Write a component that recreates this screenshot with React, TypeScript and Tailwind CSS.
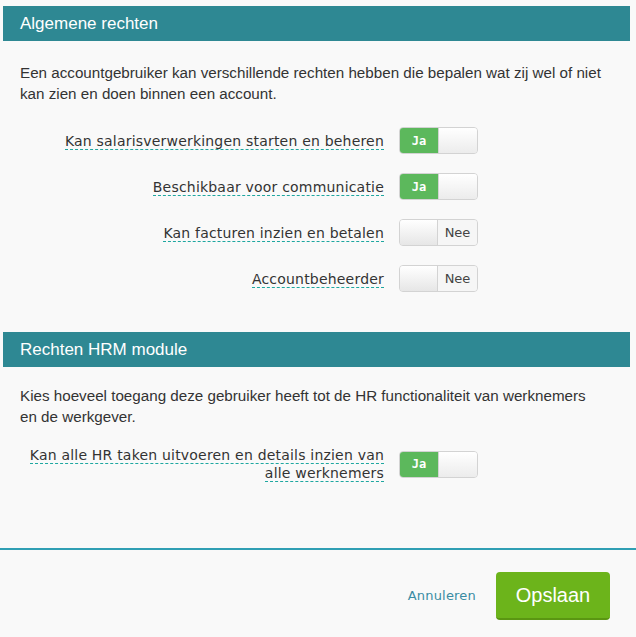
import { ReactNode } from "react";

function Toggle({ on }: { on: boolean }) {
  return (
    <div className="flex h-[27px] w-[79px] shrink-0 overflow-hidden rounded-[4px] border border-[#d3d3d3] bg-[#f4f4f4]">
      {on ? (
        <>
          <div className="flex w-[38px] items-center justify-center bg-[#5cb85c] font-['DejaVu_Sans_Mono',monospace] text-[12px] font-bold text-white">
            Ja
          </div>
          <div className="flex-1 border-l border-[#d3d3d3] bg-gradient-to-b from-white to-[#ececec]" />
        </>
      ) : (
        <>
          <div className="w-[38px] border-r border-[#d3d3d3] bg-gradient-to-b from-white to-[#e6e6e6]" />
          <div className="flex flex-1 items-center justify-center bg-[#f6f6f6] font-['DejaVu_Sans',sans-serif] text-[13px] text-[#444]">
            Nee
          </div>
        </>
      )}
    </div>
  );
}

function Row({ label, on }: { label: ReactNode; on: boolean }) {
  return (
    <div className="flex items-center">
      <div className="w-[364px] text-right font-['DejaVu_Sans',sans-serif] text-[14px] leading-[18px] tracking-[0.2px] text-[#333]">
        <span className="border-b border-dashed border-[#1ea7a0]">{label}</span>
      </div>
      <div className="ml-[15px]">
        <Toggle on={on} />
      </div>
    </div>
  );
}

function SectionHeader({ title }: { title: string }) {
  return (
    <div className="ml-[3px] flex h-[35px] w-[627px] items-center bg-[#2e8893] pl-[17px] font-['Liberation_Sans',Arial,sans-serif] text-[17px] text-white">
      {title}
    </div>
  );
}

export default function App() {
  return (
    <div className="min-h-screen bg-[#f9f9f9] pt-[6px] font-['Liberation_Sans',Arial,sans-serif] text-[#333]">
      <SectionHeader title="Algemene rechten" />
      <div className="w-[630px] pl-[20px]">
        <p className="mt-[21px] w-[583px] text-[15.2px] leading-[21px]">
          Een accountgebruiker kan verschillende rechten hebben die bepalen wat zij wel of niet
          kan zien en doen binnen een account.
        </p>
        <div className="mt-[23px] flex flex-col gap-[19px]">
          <Row label="Kan salarisverwerkingen starten en beheren" on />
          <Row label="Beschikbaar voor communicatie" on />
          <Row label="Kan facturen inzien en betalen" on={false} />
          <Row label="Accountbeheerder" on={false} />
        </div>
      </div>

      <div className="mt-[40px]">
        <SectionHeader title="Rechten HRM module" />
      </div>
      <div className="w-[630px] pl-[20px]">
        <p className="mt-[18px] w-[583px] text-[15.2px] leading-[21px]">
          Kies hoeveel toegang deze gebruiker heeft tot de HR functionaliteit van werknemers
          en de werkgever.
        </p>
        <div className="mt-[19px]">
          <Row label="Kan alle HR taken uitvoeren en details inzien van alle werknemers" on />
        </div>
      </div>

      <div className="mt-[66px] h-[2px] w-full bg-[#2f9fb4]" />

      <div className="flex w-[630px] items-center justify-end pr-[20px] pt-[22px]">
        <button className="mr-[20px] font-['DejaVu_Sans',sans-serif] text-[13px] tracking-[0.2px] text-[#3a8ca3]">
          Annuleren
        </button>
        <button className="h-[48px] w-[114px] rounded-[4px] border-b-2 border-[#5a9612] bg-[#6cb41b] text-[20px] text-white">
          Opslaan
        </button>
      </div>
    </div>
  );
}
